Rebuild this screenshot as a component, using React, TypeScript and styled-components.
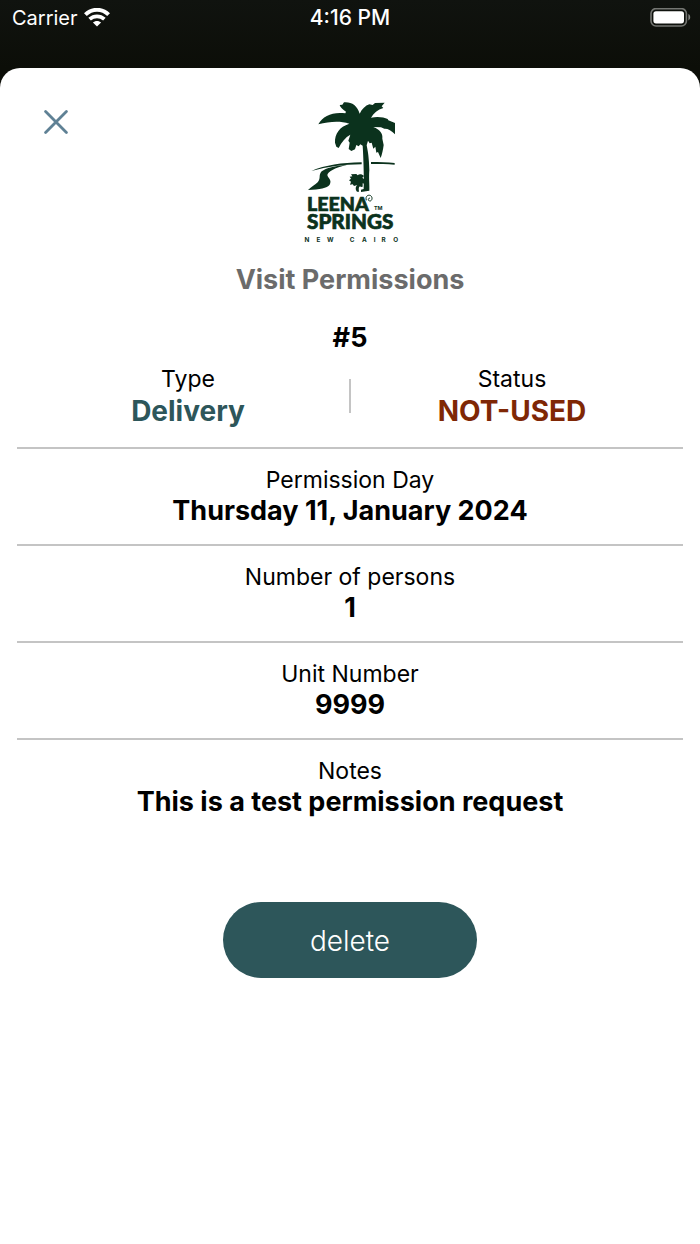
import React from "react";
import styled, { createGlobalStyle } from "styled-components";

const GlobalStyle = createGlobalStyle`
  * { box-sizing: border-box; }
  html, body, #root { height: 100%; }
  body {
    margin: 0;
    background: #0e100b;
    font-family: Inter, "Liberation Sans", sans-serif;
    color: #000;
  }
`;

const Screen = styled.div`
  min-height: 100%;
  display: flex;
  flex-direction: column;
  background: linear-gradient(#10130f, #0c0e08 68px);
`;

const StatusBar = styled.header`
  display: grid;
  grid-template-columns: 1fr auto 1fr;
  align-items: center;
  height: 36px;
  margin-bottom: 32px;
  padding: 0 9px;
  color: #fff;
  font-size: 20px;
  line-height: 24px;
`;

const Carrier = styled.div`
  display: flex;
  align-items: center;
  gap: 6px;
  padding-left: 3px;
`;

const Clock = styled.time`
  font-size: 21px;
  font-weight: 500;
`;

const Battery = styled.svg`
  justify-self: end;
`;

const Sheet = styled.main`
  flex: 1;
  display: flex;
  flex-direction: column;
  padding: 0 17px;
  background: #fff;
  border-radius: 20px 20px 0 0;
`;

const SheetHeader = styled.div`
  display: grid;
  grid-template-columns: 1fr auto 1fr;
  align-items: start;
  padding-top: 27px;
`;

const CloseButton = styled.button`
  display: flex;
  margin: 7px 0 0 19px;
  padding: 8px;
  width: 40px;
  height: 40px;
  border: 0;
  background: none;
  cursor: pointer;
`;

const Title = styled.h1`
  margin: 17px 0 0;
  color: #6b6b6b;
  font-size: 27px;
  line-height: 36px;
  font-weight: 650;
  text-align: center;
`;

const Reference = styled.h2`
  margin: 24px 0 10px;
  font-size: 27px;
  line-height: 32px;
  font-weight: 650;
  text-align: center;
`;

const Details = styled.dl`
  margin: 0;
`;

const Summary = styled.div`
  display: flex;
  align-items: center;
  padding: 0 9px 19px;
`;

const Field = styled.div`
  flex: 1;
  text-align: center;
`;

const Separator = styled.div`
  width: 2px;
  height: 34px;
  margin: 0 -1px;
  background: #c4c4c4;
`;

const Row = styled(Field)`
  padding: 16px 0 19px;
  border-top: 2px solid #c4c4c4;
`;

const Label = styled.dt`
  font-size: 23px;
  line-height: 31px;
`;

const Value = styled.dd`
  margin: 0;
  font-size: 27px;
  line-height: 29px;
  font-weight: 650;
`;

const SummaryValue = styled(Value)<{ $color: string }>`
  color: ${(p) => p.$color};
  font-size: 28px;
  line-height: 33px;
  font-weight: 700;
`;

const DeleteButton = styled.button`
  align-self: center;
  width: 254px;
  height: 76px;
  margin: 67px 0 40px;
  padding: 2px 0 0;
  border: 0;
  border-radius: 38px;
  background: #2d565a;
  color: #fff;
  font-family: inherit;
  font-size: 28px;
  font-weight: 350;
  cursor: pointer;
`;

const rows = [
  { label: "Permission Day", value: "Thursday 11, January 2024" },
  { label: "Number of persons", value: "1" },
  { label: "Unit Number", value: "9999" },
  { label: "Notes", value: "This is a test permission request" },
];

function WifiIcon() {
  return (
    <svg width="26" height="20" viewBox="0 0 26 20" fill="none" stroke="#fff" aria-hidden="true">
      <path d="M1.4 6.6C8 .2 18 .2 24.6 6.6" strokeWidth="4" />
      <path d="M5.6 11.2C10 7.3 16 7.3 20.4 11.2" strokeWidth="3.8" />
      <path d="M13 18.6L8.9 14.6C11 12.4 15 12.4 17.1 14.6Z" fill="#fff" stroke="none" />
    </svg>
  );
}

function BatteryIcon() {
  return (
    <Battery width="42" height="20" viewBox="0 0 42 20" role="img" aria-label="Battery full">
      <rect x="2" y="0.6" width="35.4" height="17.4" rx="5" fill="none" stroke="#747672" strokeWidth="1.6" />
      <rect x="4.4" y="3.2" width="30.6" height="12.2" rx="2.6" fill="#fff" />
      <path d="M39.4 6C41.8 7.2 41.8 11.2 39.4 12.4Z" fill="#858783" />
    </Battery>
  );
}

function Logo() {
  return (
    <svg width="110" height="150" viewBox="0 0 330 450" fill="#0b321d" role="img" aria-label="Leena Springs New Cairo">
      <path d="M70 88C84 62 113 50 151 55L153 50C143 43 135 36 134 30L142 29L147 22C169 20 187 31 194 56C201 42 211 32 223 28L233 30L240 24L269 23L260 34L265 39C248 44 236 54 228 68C249 64 267 67 278 72L280 76L300 84V118C289 106 278 100 268 101L258 97L235 96C255 104 264 116 262 131L266 150C264 166 261 178 257 189L249 171L244 173L241 155L235 161L230 143L224 145L219 137L215 151C219 170 222 190 223 225C221 250 224 272 223 287L198 291V284L206 282C208 258 205 180 203 152L196 148L191 154L184 150L180 163L169 168L161 162L164 143L160 137L166 119C151 127 140 141 131 159L124 155L120 143C119 116 133 96 163 86C133 77 103 80 70 88Z" />
      <path d="M168 238L184 237L188 241C193 236 202 238 207 243L202 248L210 255L211 267L203 265V275L198 276C192 272 190 279 192 290H186C180 283 182 274 187 270L177 273L173 268L165 269L168 260L162 256L168 251L164 245L172 244Z" />
      <path d="M49 228C92 210 139 203 200 202V208C142 209 100 215 49 228Z" />
      <path d="M228 201C253 201 278 202 299 204V209C277 207 252 207 228 207Z" />
      <path d="M158 209C116 219 99 230 97 240C99 251 112 254 104 269C96 279 75 283 39 285C49 275 61 270 68 262C79 249 69 242 80 229C93 218 119 213 158 209Z" />
      <g fontFamily="Lato, sans-serif" fontWeight="900" stroke="#0b321d" strokeWidth="2">
        <text x="36" y="347" fontSize="59">LEENA</text>
        <text x="36" y="402" fontSize="62">SPRINGS</text>
      </g>
      <path d="M214 316C210 303 220 298 227 302C235 308 230 320 223 318C217 314 221 308 225 310" fill="none" stroke="#0b321d" strokeWidth="3" />
      <g fontFamily="Inter, sans-serif" fontWeight="700" fontSize="19" textAnchor="middle">
        <text x="250" y="345" fontSize="16">TM</text>
        <text y="440" x="36 70 106 171 208 239 266 302">NEWCAIRO</text>
      </g>
    </svg>
  );
}

export default function App() {
  return (
    <>
      <GlobalStyle />
      <Screen>
        <StatusBar>
          <Carrier>
            Carrier
            <WifiIcon />
          </Carrier>
          <Clock>4:16 PM</Clock>
          <BatteryIcon />
        </StatusBar>
        <Sheet>
          <SheetHeader>
            <CloseButton type="button" aria-label="Close">
              <svg width="24" height="24" viewBox="0 0 24 24" stroke="#5f8195" strokeWidth="2.8" strokeLinecap="round">
                <path d="M1.6 1.6L22.4 22.4M22.4 1.6L1.6 22.4" />
              </svg>
            </CloseButton>
            <Logo />
          </SheetHeader>
          <Title>Visit Permissions</Title>
          <Reference>#5</Reference>
          <Details>
            <Summary>
              <Field>
                <Label>Type</Label>
                <SummaryValue $color="#2d565a">Delivery</SummaryValue>
              </Field>
              <Separator />
              <Field>
                <Label>Status</Label>
                <SummaryValue $color="#7f2705">NOT-USED</SummaryValue>
              </Field>
            </Summary>
            {rows.map((row) => (
              <Row key={row.label}>
                <Label>{row.label}</Label>
                <Value>{row.value}</Value>
              </Row>
            ))}
          </Details>
          <DeleteButton type="button">delete</DeleteButton>
        </Sheet>
      </Screen>
    </>
  );
}
